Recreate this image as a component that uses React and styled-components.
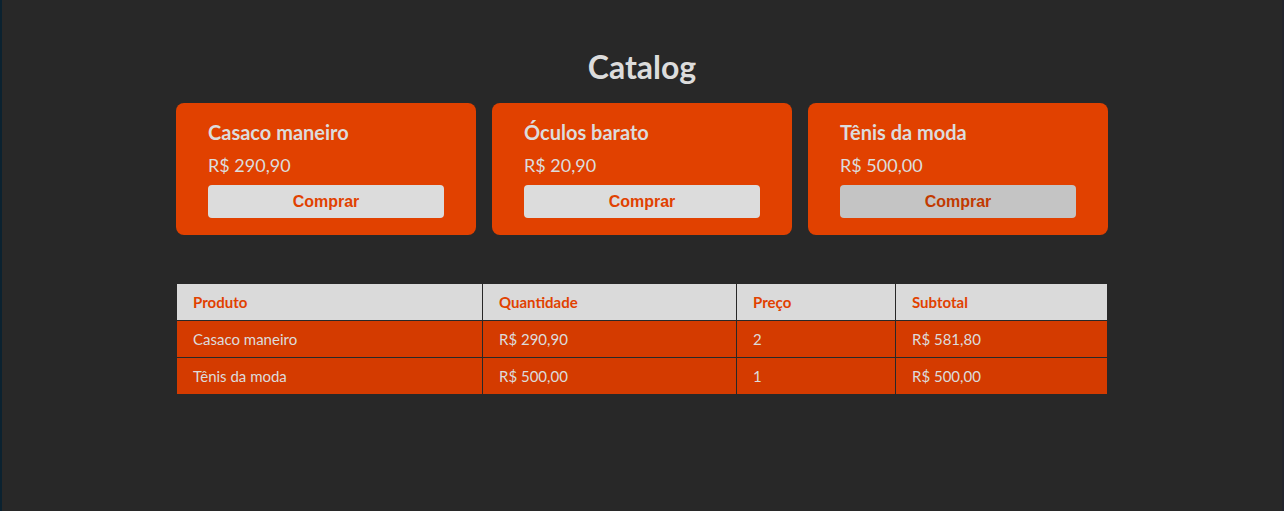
import React from 'react'
import styled, { createGlobalStyle } from 'styled-components'

const GlobalStyle = createGlobalStyle`
  * {
    box-sizing: border-box;
  }
  body {
    margin: 0;
    background: #282828;
    font-family: Lato, 'Open Sans', sans-serif;
  }
`

const Page = styled.div`
  min-height: 100vh;
  background: #282828;
  border-left: 2px solid #0b2230;
  border-right: 2px solid #22242c;
  display: flex;
  flex-direction: column;
  align-items: center;
  padding-top: 47px;
`

const Title = styled.h1`
  margin: 0 0 17px;
  font-size: 32px;
  line-height: 39px;
  font-weight: 700;
  color: #dcdcdc;
`

const CardList = styled.div`
  display: grid;
  grid-template-columns: repeat(3, 300px);
  gap: 16px;
`

const Card = styled.div`
  background: #e14100;
  border-radius: 8px;
  padding: 17px 32px 17px;
  display: flex;
  flex-direction: column;
  color: #dcdcdc;
`

const CardTitle = styled.strong`
  font-size: 20px;
  line-height: 24px;
  font-weight: 700;
`

const Price = styled.span`
  margin-top: 10px;
  font-size: 18px;
  line-height: 22px;
`

const BuyButton = styled.button`
  margin-top: 9px;
  height: 33px;
  border: 0;
  border-radius: 4px;
  background: ${(p) => (p.$active ? '#c4c4c4' : '#dcdcdc')};
  color: ${(p) => (p.$active ? '#c23a00' : '#e14100')};
  font-family: 'Liberation Sans', Arial, sans-serif;
  font-size: 16px;
  font-weight: 700;
  cursor: pointer;
`

const Table = styled.table`
  margin-top: 48px;
  width: 932px;
  border-collapse: collapse;
  font-size: 15px;
  text-align: left;
`

const HeadCell = styled.th`
  height: 37px;
  padding: 0 16px;
  background: #dadada;
  color: #e14100;
  font-weight: 700;
  border: 1px solid #282828;
`

const Cell = styled.td`
  height: 37px;
  padding: 0 16px;
  background: #d43b00;
  color: #dcdcdc;
  border: 1px solid #282828;
`

const products = [
  { id: 1, title: 'Casaco maneiro', price: 'R$ 290,90' },
  { id: 2, title: 'Óculos barato', price: 'R$ 20,90' },
  { id: 3, title: 'Tênis da moda', price: 'R$ 500,00', active: true },
]

const cart = [
  { id: 1, title: 'Casaco maneiro', price: 'R$ 290,90', amount: 2, subtotal: 'R$ 581,80' },
  { id: 3, title: 'Tênis da moda', price: 'R$ 500,00', amount: 1, subtotal: 'R$ 500,00' },
]

export default function App() {
  return (
    <Page>
      <GlobalStyle />
      <Title>Catalog</Title>
      <CardList>
        {products.map((product) => (
          <Card key={product.id}>
            <CardTitle>{product.title}</CardTitle>
            <Price>{product.price}</Price>
            <BuyButton $active={product.active}>Comprar</BuyButton>
          </Card>
        ))}
      </CardList>

      <Table>
        <colgroup>
          <col style={{ width: 306 }} />
          <col style={{ width: 254 }} />
          <col style={{ width: 159 }} />
          <col />
        </colgroup>
        <thead>
          <tr>
            <HeadCell>Produto</HeadCell>
            <HeadCell>Quantidade</HeadCell>
            <HeadCell>Preço</HeadCell>
            <HeadCell>Subtotal</HeadCell>
          </tr>
        </thead>
        <tbody>
          {cart.map((item) => (
            <tr key={item.id}>
              <Cell>{item.title}</Cell>
              <Cell>{item.price}</Cell>
              <Cell>{item.amount}</Cell>
              <Cell>{item.subtotal}</Cell>
            </tr>
          ))}
        </tbody>
      </Table>
    </Page>
  )
}
